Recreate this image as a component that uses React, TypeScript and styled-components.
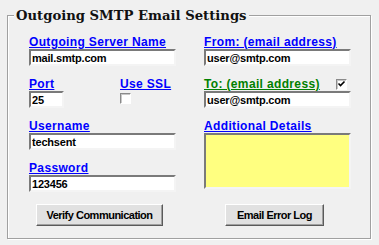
import styled, { createGlobalStyle } from "styled-components";

const GlobalStyle = createGlobalStyle`
  html, body {
    margin: 0;
    padding: 0;
    background: #f0f0f0;
  }
  body {
    width: 379px;
    height: 245px;
    overflow: hidden;
    font-family: "Liberation Sans", Arial, sans-serif;
  }
`;

const Group = styled.fieldset`
  box-sizing: border-box;
  width: 364px;
  margin: 7px 0 0 7px;
  padding: 0;
  border: 1px solid #a0a0a0;
  box-shadow: inset 1px 1px 0 #ffffff, 1px 1px 0 #ffffff;
`;

const Title = styled.legend`
  margin-left: 6px;
  padding: 0 2px;
  background: #f0f0f0;
  font-family: "DejaVu Serif", "Liberation Serif", serif;
  font-weight: bold;
  font-size: 13.2px;
  line-height: 17px;
  color: #111;
`;

const Body = styled.div`
  display: grid;
  grid-template-columns: 147px 147px;
  column-gap: 28px;
  row-gap: 12px;
  padding: 12px 0 12px 21px;
`;

const Field = styled.div<{ $span?: number }>`
  display: flex;
  flex-direction: column;
  grid-row: ${(p) => (p.$span ? `span ${p.$span}` : "auto")};
`;

const Label = styled.span<{ $color?: string }>`
  display: block;
  height: 13px;
  font-size: 12px;
  line-height: 13px;
  font-weight: bold;
  letter-spacing: 0.35px;
  color: ${(p) => p.$color || "#0000ff"};
  text-decoration: underline;
  white-space: nowrap;
`;

const Input = styled.input<{ $w?: number }>`
  box-sizing: border-box;
  width: ${(p) => p.$w || 147}px;
  height: 17px;
  margin: 0;
  padding: 0 0 0 1px;
  border: 2px solid;
  border-color: #7a7a7a #f4f4f4 #f4f4f4 #7a7a7a;
  background: #ffffff;
  font-family: "Liberation Sans", Arial, sans-serif;
  font-size: 11px;
  font-weight: bold;
  letter-spacing: -0.2px;
  color: #000;
  outline: none;
`;

const Notes = styled.textarea`
  box-sizing: border-box;
  width: 147px;
  height: 56px;
  margin: 0;
  padding: 1px;
  border: 2px solid;
  border-color: #7a7a7a #f4f4f4 #f4f4f4 #7a7a7a;
  background: #ffff80;
  resize: none;
  outline: none;
`;

const SplitRow = styled.div`
  display: grid;
  grid-template-columns: 91px 1fr;
`;

const LabelRow = styled.div`
  display: flex;
  justify-content: space-between;
  align-items: flex-start;
  padding-right: 4px;
`;

const Check = styled.span<{ $top?: number }>`
  box-sizing: border-box;
  display: block;
  width: 11px;
  height: 11px;
  margin-top: ${(p) => p.$top || 0}px;
  border: 1px solid;
  border-color: #8a8a8a #ffffff #ffffff #8a8a8a;
  box-shadow: inset 1px 1px 0 #c8c8c8;
  background: #ffffff;
  svg {
    display: block;
  }
`;

const ButtonCell = styled.div`
  display: flex;
  justify-content: center;
  padding-right: 6px;
`;

const Button = styled.button<{ $w: number }>`
  box-sizing: border-box;
  width: ${(p) => p.$w}px;
  height: 22px;
  margin: 0;
  padding: 0;
  border: 1px solid;
  border-color: #ffffff #5a5a5a #5a5a5a #ffffff;
  box-shadow: inset -1px -1px 0 #a0a0a0;
  background: #e1e1e1;
  font-family: "Liberation Sans", Arial, sans-serif;
  font-size: 11px;
  font-weight: bold;
  letter-spacing: -0.5px;
  color: #000;
`;

const Tick = () => (
  <svg width="9" height="9" viewBox="0 0 9 9">
    <path d="M1.5 3.5 L3.5 5.5 L7.5 1.5" stroke="#000" strokeWidth="1.6" fill="none" />
  </svg>
);

export default function App() {
  return (
    <>
      <GlobalStyle />
      <Group>
        <Title>Outgoing SMTP Email Settings</Title>
        <Body>
          <Field>
            <Label>Outgoing Server Name</Label>
            <Input readOnly value="mail.smtp.com" />
          </Field>
          <Field>
            <Label>From: (email address)</Label>
            <Input readOnly value="user@smtp.com" />
          </Field>

          <SplitRow>
            <Field>
              <Label>Port</Label>
              <Input readOnly value="25" $w={35} />
            </Field>
            <Field>
              <Label>Use SSL</Label>
              <Check $top={2} />
            </Field>
          </SplitRow>
          <Field>
            <LabelRow>
              <Label $color="#008000">To: (email address)</Label>
              <Check $top={1}>
                <Tick />
              </Check>
            </LabelRow>
            <Input readOnly value="user@smtp.com" />
          </Field>

          <Field>
            <Label>Username</Label>
            <Input readOnly value="techsent" />
          </Field>
          <Field $span={2}>
            <Label>Additional Details</Label>
            <Notes readOnly value="" />
          </Field>

          <Field>
            <Label>Password</Label>
            <Input readOnly value="123456" />
          </Field>

          <ButtonCell>
            <Button $w={127}>Verify Communication</Button>
          </ButtonCell>
          <ButtonCell>
            <Button $w={99}>Email Error Log</Button>
          </ButtonCell>
        </Body>
      </Group>
    </>
  );
}
